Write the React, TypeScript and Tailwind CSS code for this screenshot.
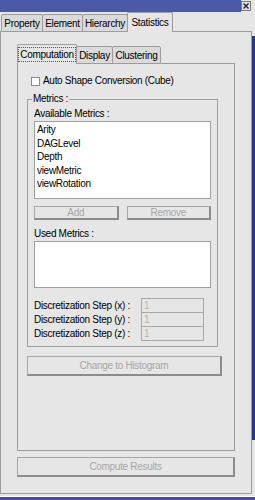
import React from "react";

type TabProps = {
  label: string;
  width: string;
  active?: boolean;
  first?: boolean;
  focus?: boolean;
};

function Tab({ label, width, active, first, focus }: TabProps) {
  if (active) {
    return (
      <div
        className={`relative z-10 ${first ? "" : "-ml-px"} ${width} h-[20px] flex items-center justify-center border-t border-l border-r border-[#9c9c9c] bg-[#e6e6e6] rounded-t-[2px]`}
      >
        {focus ? (
          <span className="border border-dotted border-[#555] px-[1px] leading-[13px]">{label}</span>
        ) : (
          <span className="leading-[13px]">{label}</span>
        )}
      </div>
    );
  }
  return (
    <div
      className={`${first ? "" : "-ml-px"} ${width} h-[18px] flex items-center justify-center border border-[#9c9c9c] bg-[#dadada] rounded-t-[2px]`}
    >
      <span className="leading-[13px]">{label}</span>
    </div>
  );
}

function PushButton({ label, className }: { label: string; className: string }) {
  return (
    <div
      className={`${className} flex items-center justify-center border-t border-l border-[#a8a8a8] border-b-2 border-r-2 border-b-[#8c8c8c] border-r-[#8c8c8c] bg-[#e6e6e6] text-[#a6a6a6]`}
    >
      {label}
    </div>
  );
}

const metrics = ["Arity", "DAGLevel", "Depth", "viewMetric", "viewRotation"];

export default function App() {
  return (
    <div className="w-[255px] h-[500px] bg-[#e6e6e6] overflow-hidden flex flex-col text-[10px] tracking-[-0.3px] text-black [font-family:Liberation_Sans,Arial,sans-serif]">
      {/* title bar */}
      <div className="shrink-0 h-[12px] flex bg-[#e6e6e6]">
        <div className="shrink-0 w-[241px] h-[12px] bg-[#4b5aa7]" />
        <div className="shrink-0 w-[10px] h-[10px] mt-[1px] border border-[#7a7a7a] bg-[#e2e2e2] flex items-center justify-center">
          <svg width="6" height="6" viewBox="0 0 6 6">
            <path d="M0.5 0.5 L5.5 5.5 M5.5 0.5 L0.5 5.5" stroke="#222" strokeWidth="1.4" />
          </svg>
        </div>
      </div>

      <div className="shrink-0 flex">
        <div className="shrink-0 w-[252px] flex flex-col">
          {/* outer tabs */}
          <div className="h-[20px] flex items-end">
            <div className="w-[1px] h-px bg-[#9c9c9c]" />
            <Tab label="Property" width="w-[42px]" first />
            <Tab label="Element" width="w-[41px]" />
            <Tab label="Hierarchy" width="w-[46px]" />
            <Tab label="Statistics" width="w-[46px]" active />
            <div className="flex-1 h-px bg-[#9c9c9c]" />
          </div>

          {/* outer panel */}
          <div className="border-l border-r border-b border-[#9c9c9c] px-[16px] pt-[14px] pb-[16px]">
            {/* inner tabs */}
            <div className="h-[18px] flex items-end">
              <Tab label="Computation" width="w-[60px]" active first focus />
              <Tab label="Display" width="w-[37px]" />
              <Tab label="Clustering" width="w-[49px]" />
              <div className="flex-1 h-px bg-[#9c9c9c]" />
            </div>

            {/* inner panel */}
            <div className="h-[387px] border-l border-r border-b border-[#9c9c9c] pl-[9px] pt-[11px]">
              <div className="h-[12px] flex items-center ml-[4px] gap-[3px]">
                <div className="w-[9px] h-[9px] border border-[#8a8a8a] bg-white" />
                <span className="leading-[12px]">Auto Shape Conversion (Cube)</span>
              </div>

              <fieldset className="mt-[6px] w-[191px] border border-[#a0a0a0] px-[6px] pb-[5px]">
                <legend className="ml-[-2px] px-[1px] leading-[12px]">Metrics :</legend>
                <div className="mt-[2px] leading-[13px]">Available Metrics :</div>
                <div className="mt-[1px] h-[78px] border border-[#a0a0a0] bg-white pt-[1px] pl-[2px]">
                  {metrics.map((m) => (
                    <div key={m} className="leading-[13.5px]">
                      {m}
                    </div>
                  ))}
                </div>
                <div className="mt-[7px] flex gap-[8px]">
                  <PushButton label="Add" className="flex-1 h-[14px]" />
                  <PushButton label="Remove" className="flex-1 h-[14px]" />
                </div>
                <div className="mt-[7px] leading-[13px]">Used Metrics :</div>
                <div className="mt-[1px] h-[47px] border border-[#a0a0a0] bg-white" />
                <div className="mt-[10px] flex flex-col">
                  {["x", "y", "z"].map((a, i) => (
                    <div key={a} className={`flex items-center h-[15px] ${i > 0 ? "-mt-px" : ""}`}>
                      <span className="w-[107px] leading-[13px]">Discretization Step ({a}) :</span>
                      <div className="w-[63px] h-[15px] border border-[#a8a8a8] pl-[2px] text-[#b4b4b4] leading-[13px]">
                        1
                      </div>
                    </div>
                  ))}
                </div>
              </fieldset>

              <PushButton label="Change to Histogram" className="mt-[9px] w-[195px] h-[20px]" />
            </div>

            <PushButton label="Compute Results" className="mt-[6px] w-[218px] h-[20px]" />
          </div>
        </div>
        {/* window edge on the right */}
        <div className="shrink-0 w-[3px] flex flex-col">
          <div className="h-[24px]" />
          <div className="h-[404px] bg-[#27378a]" />
        </div>
      </div>

      <div className="shrink-0 h-[2px]" />
      <div className="shrink-0 h-px bg-white" />
      <div className="shrink-0 h-[3px] bg-[#3f4fb0]" />
    </div>
  );
}
